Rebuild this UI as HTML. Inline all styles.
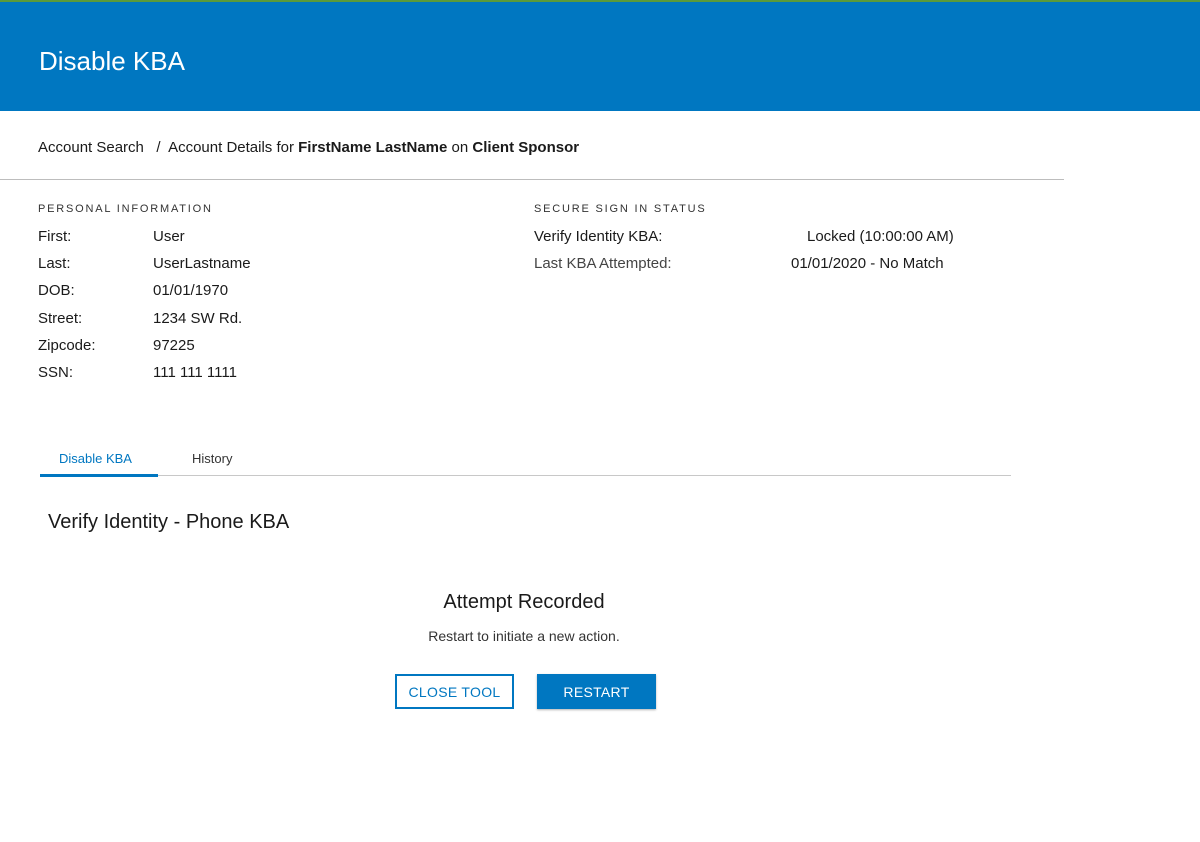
<!DOCTYPE html>
<html><head><meta charset="utf-8"><style>
*{margin:0;padding:0;box-sizing:border-box}
body{width:1200px;height:842px;background:#fff;font-family:"Liberation Sans",sans-serif;color:#1a1a1a;position:relative;overflow:hidden}
.hdr{position:absolute;left:0;top:0;width:1200px;height:111px;background:#0077c1;border-top:2px solid #5a9a3a}
.hdr h1{position:absolute;left:39px;top:44px;font-size:26px;font-weight:normal;color:#fff}
.abs{position:absolute;white-space:nowrap}
.bc{left:38px;top:139px;font-size:15px}
.hr1{position:absolute;left:0;top:179px;width:1064px;height:1px;background:#bdbdbd}
.lbl{font-size:11px;letter-spacing:1.8px;color:#333}
.row{font-size:15px}
.tabline{position:absolute;left:40px;top:475px;width:971px;height:1px;background:#c8c8c8}
.tabact{position:absolute;left:40px;top:474px;width:118px;height:3px;background:#0077c1}
.btn{position:absolute;top:674px;height:35px;font-size:14px;display:flex;align-items:center;justify-content:center;letter-spacing:.3px}
</style></head><body>
<div class="hdr"><h1>Disable KBA</h1></div>
<div class="abs bc">Account Search &nbsp;&nbsp;/&nbsp; Account Details for <b>FirstName LastName</b> on <b>Client Sponsor</b></div>
<div class="hr1"></div>
<div class="abs lbl" style="left:38px;top:203px">PERSONAL INFORMATION</div>
<div class="abs lbl" style="left:534px;top:203px">SECURE SIGN IN STATUS</div>
<div class="abs row" style="left:38px;top:228px">First:</div><div class="abs row" style="left:153px;top:228px">User</div>
<div class="abs row" style="left:38px;top:255px">Last:</div><div class="abs row" style="left:153px;top:255px">UserLastname</div>
<div class="abs row" style="left:38px;top:282px">DOB:</div><div class="abs row" style="left:153px;top:282px">01/01/1970</div>
<div class="abs row" style="left:38px;top:310px">Street:</div><div class="abs row" style="left:153px;top:310px">1234 SW Rd.</div>
<div class="abs row" style="left:38px;top:337px">Zipcode:</div><div class="abs row" style="left:153px;top:337px">97225</div>
<div class="abs row" style="left:38px;top:364px">SSN:</div><div class="abs row" style="left:153px;top:364px">111 111 1111</div>
<div class="abs row" style="left:534px;top:228px">Verify Identity KBA:</div><div class="abs row" style="left:807px;top:228px">Locked (10:00:00 AM)</div>
<div class="abs row" style="left:534px;top:255px;color:#444">Last KBA Attempted:</div><div class="abs row" style="left:791px;top:255px">01/01/2020 - No Match</div>
<div class="abs" style="left:59px;top:451px;font-size:13px;color:#0077c1">Disable KBA</div>
<div class="abs" style="left:192px;top:451px;font-size:13px;color:#333">History</div>
<div class="tabline"></div><div class="tabact"></div>
<div class="abs" style="left:48px;top:511px;font-size:20px">Verify Identity - Phone KBA</div>
<div class="abs" style="left:0;width:1048px;top:591px;text-align:center;font-size:20px">Attempt Recorded</div>
<div class="abs" style="left:0;width:1048px;top:628px;text-align:center;font-size:14px;color:#333">Restart to initiate a new action.</div>
<div class="btn" style="left:395px;width:119px;border:2px solid #0077c1;color:#0077c1">CLOSE TOOL</div>
<div class="btn" style="left:537px;width:119px;background:#0077c1;color:#fff;box-shadow:0 1px 2px rgba(0,0,0,.3)">RESTART</div>
</body></html>
